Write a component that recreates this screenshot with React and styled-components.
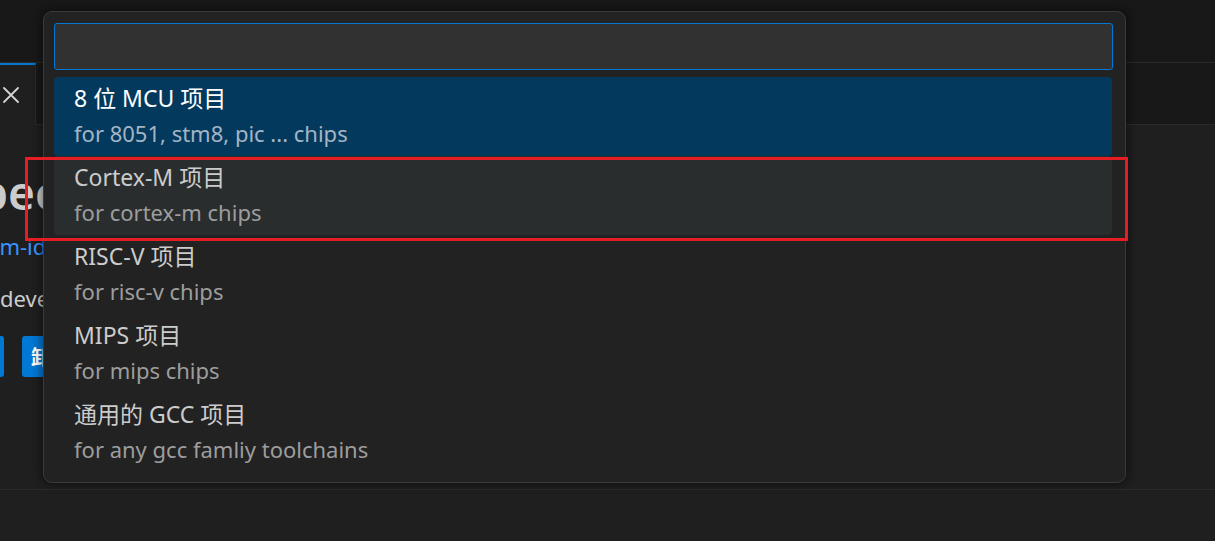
import React from "react";
import styled, { createGlobalStyle } from "styled-components";

const GlobalStyle = createGlobalStyle`
  html, body { margin: 0; padding: 0; background: #1f1f1f; overflow: hidden; }
  * { box-sizing: border-box; }
  body { font-family: "Noto Sans", "Noto Sans CJK SC", sans-serif; }
`;

const Page = styled.div`
  position: relative;
  width: 1215px;
  height: 541px;
  display: flex;
  flex-direction: column;
  background: #1f1f1f;
  overflow: hidden;
`;

const TitleBar = styled.div`
  height: 63px;
  flex: none;
  background: #181818;
  border-bottom: 1px solid #2b2b2b;
`;

const TabBar = styled.div`
  height: 62px;
  flex: none;
  display: flex;
  background: #181818;
  border-bottom: 1px solid #2b2b2b;
`;

const Tab = styled.div`
  width: 36px;
  display: flex;
  align-items: center;
  justify-content: flex-start;
  padding-left: 1px;
  background: #1f1f1f;
  border-top: 2px solid #0078d4;
  border-right: 1px solid #2b2b2b;
  margin-bottom: -1px;
`;

const Editor = styled.div`
  flex: 1;
  display: flex;
  flex-direction: column;
  align-items: flex-start;
  background: #1f1f1f;
  font-family: "Noto Sans", "Noto Sans CJK SC", sans-serif;
  white-space: nowrap;
`;

const Heading = styled.div`
  margin-top: 37px;
  margin-left: ${(p) => -p.$shift}px;
  font-size: 46px;
  line-height: 60px;
  font-weight: 600;
  color: #cccccc;
`;

const Link = styled.div`
  margin-top: 9px;
  margin-left: ${(p) => -p.$shift}px;
  font-size: 22px;
  line-height: 30px;
  color: #3794ff;
`;

const Desc = styled.div`
  margin-top: 22px;
  margin-left: ${(p) => -p.$shift}px;
  font-size: 22px;
  line-height: 30px;
  color: #cccccc;
`;

const ButtonRow = styled.div`
  margin-top: 23px;
  margin-left: ${(p) => -p.$shift}px;
  display: flex;
  gap: 18px;
`;

const ActionButton = styled.div`
  height: 41px;
  padding: 0 9px;
  display: flex;
  align-items: center;
  border-radius: 3px;
  background: #0078d4;
  color: #ffffff;
  font-size: 20px;
  font-weight: 700;
`;

const BottomPanel = styled.div`
  height: 52px;
  flex: none;
  background: #1f1f1f;
  border-top: 1px solid #2b2b2b;
`;

const QuickPick = styled.div`
  position: absolute;
  left: 43px;
  top: 11px;
  width: 1083px;
  height: 472px;
  padding: 11px 11px 10px 10px;
  display: flex;
  flex-direction: column;
  background: #222222;
  border: 1px solid #3a3a3a;
  border-radius: 9px;
  box-shadow: 0 0 10px 2px rgba(0, 0, 0, 0.45);
`;

const Input = styled.div`
  height: 47px;
  flex: none;
  margin-right: 1px;
  background: #313131;
  border: 1px solid #0078d4;
  border-radius: 3px;
`;

const List = styled.div`
  margin-top: 7px;
  display: flex;
  flex-direction: column;
  margin-right: 2px;
`;

const Row = styled.div`
  height: 79px;
  padding: 5px 20px 0;
  border-radius: 4px;
  background: ${(p) =>
    p.$state === "selected" ? "#04395e" : p.$state === "hover" ? "#2a2d2e" : "transparent"};
  font-family: "Noto Sans", "Noto Sans CJK SC", sans-serif;
  white-space: nowrap;
`;

const Label = styled.div`
  font-size: 23px;
  line-height: 32px;
  color: ${(p) => (p.$selected ? "#ffffff" : "#cccccc")};
`;

const Description = styled.div`
  margin-top: 3px;
  font-size: 22px;
  line-height: 32px;
  color: ${(p) => (p.$selected ? "#a3b5c4" : "#9d9d9d")};
`;

const Highlight = styled.div`
  position: absolute;
  left: 25px;
  top: 157px;
  width: 1103px;
  height: 84px;
  border: 3px solid #e51d25;
  pointer-events: none;
`;

const CloseIcon = () => (
  <svg width="20" height="20" viewBox="0 0 20 20" fill="none">
    <path d="M3 3L17 17M17 3L3 17" stroke="#d4d4d4" strokeWidth="1.8" strokeLinecap="round" />
  </svg>
);

const items = [
  { label: "8 位 MCU 项目", desc: "for 8051, stm8, pic ... chips", state: "selected" },
  { label: "Cortex-M 项目", desc: "for cortex-m chips", state: "hover" },
  { label: "RISC-V 项目", desc: "for risc-v chips" },
  { label: "MIPS 项目", desc: "for mips chips" },
  { label: "通用的 GCC 项目", desc: "for any gcc famliy toolchains" },
];

export default function App() {
  return (
    <>
      <GlobalStyle />
      <Page>
        <TitleBar />
        <TabBar>
          <Tab>
            <CloseIcon />
          </Tab>
        </TabBar>
        <Editor>
          <Heading $shift={46}>Spec Embedded IDE</Heading>
          <Link $shift={13}>em-ide.com</Link>
          <Desc $shift={0}>development environment for embedded</Desc>
          <ButtonRow $shift={54}>
            <ActionButton>禁用</ActionButton>
            <ActionButton>卸载</ActionButton>
          </ButtonRow>
        </Editor>
        <BottomPanel />
        <QuickPick>
          <Input />
          <List>
            {items.map((it) => (
              <Row key={it.label} $state={it.state}>
                <Label $selected={it.state === "selected"}>{it.label}</Label>
                <Description $selected={it.state === "selected"}>{it.desc}</Description>
              </Row>
            ))}
          </List>
        </QuickPick>
        <Highlight />
      </Page>
    </>
  );
}
